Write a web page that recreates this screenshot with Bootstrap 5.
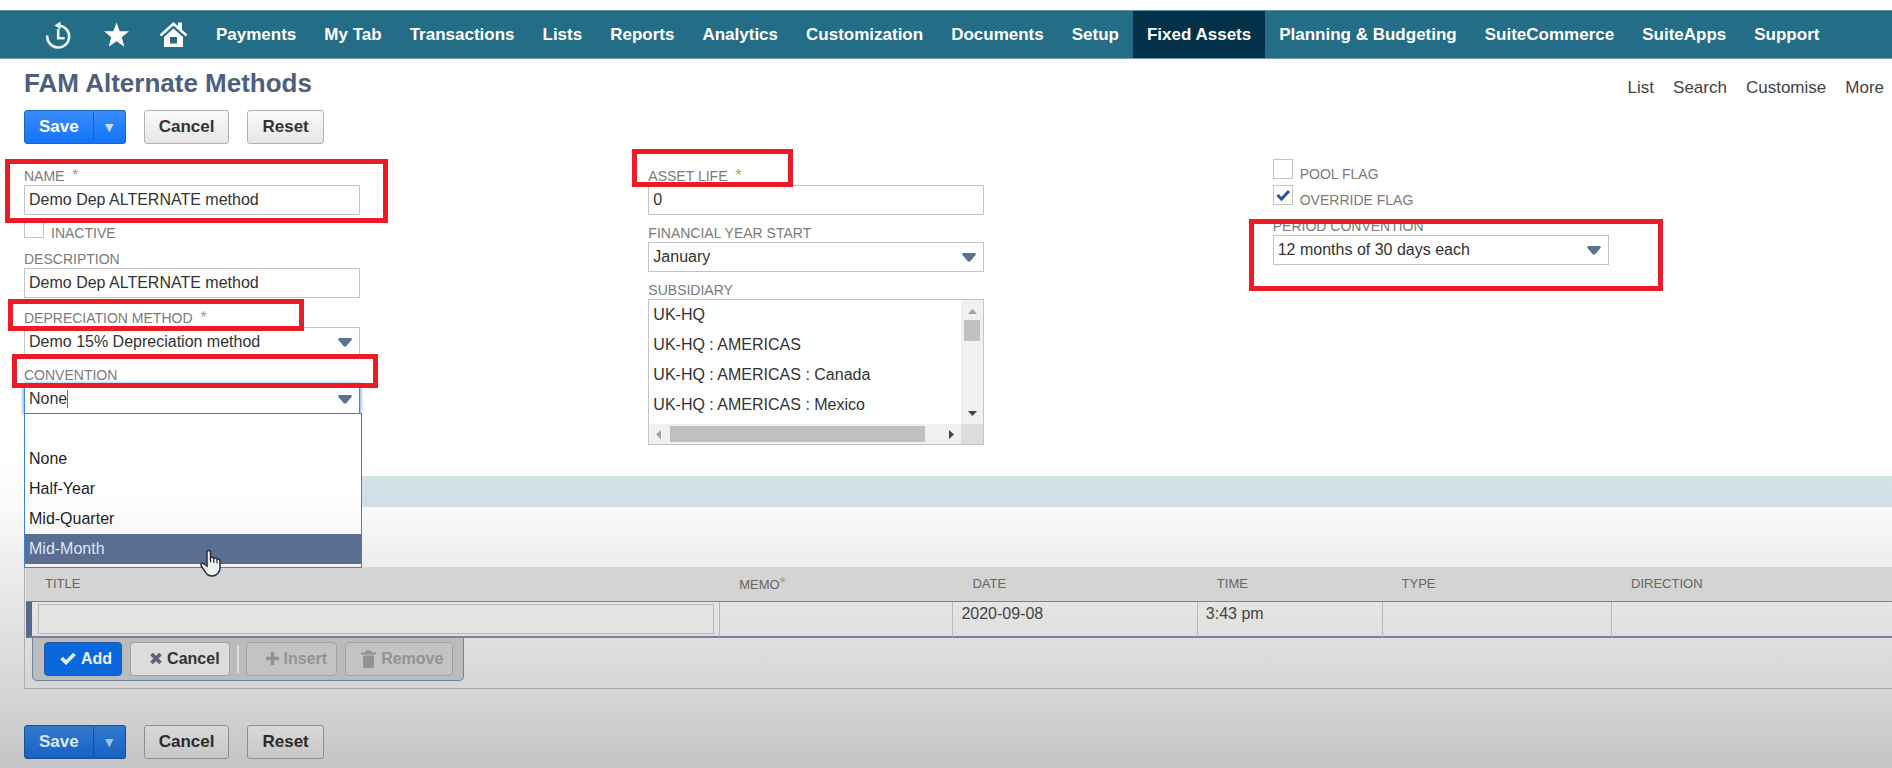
<!DOCTYPE html>
<html lang="en">
<head>
<meta charset="utf-8">
<meta name="viewport" content="width=device-width, initial-scale=1">
<title>FAM Alternate Methods</title>
<link href="https://cdn.jsdelivr.net/npm/bootstrap@5.3.0/dist/css/bootstrap.min.css" rel="stylesheet">
<style>
  body {
    font-family: "Liberation Sans", Arial, sans-serif;
    font-size: 16px;
    color: #333;
    min-height: 100vh;
    overflow-x: hidden;
    background: linear-gradient(#fff 0, #fff 59%, #fafafa 66%, #eee 73%, #dedede 84%, #d4d4d4 91%, #c4c4c4 100%) no-repeat;
  }
  /* main navigation */
  .main-nav { background: #236d86; height: 49px; margin-top: 10px; padding: 0 0 0 31px; border-bottom: 1px solid #6d9daf; border-top: 1px solid #5c93a6; }
  .main-nav .nav-link { color: #fff; font-size: 17px; font-weight: 700; line-height: 20px; padding: 0 14px; white-space: nowrap; display: flex; align-items: center; height: 47px; }
  .main-nav .nav-link.active { background: #03314a; }
  /* page heading */
  .page-head { padding-top: 9px; }
  .page-title { font-size: 26px; line-height: 30px; font-weight: 700; color: #4d5f7e; }
  .page-links { gap: 19px; }
  .page-links a { color: #444; font-size: 17px; line-height: 20px; text-decoration: none; }
  .edge { padding-left: 24px; }
  /* form buttons */
  .form-btn { font-size: 17px; font-weight: 700; line-height: 20px; height: 34px; padding: 0 14px; border-radius: 3px; border: 1px solid #b2b2b2; color: #333; background: linear-gradient(#fafafa, #e6e6e6); }
  .form-btn.main { color: #fff; border-color: #1a62c4; background: linear-gradient(#3a8cfd, #1473f8); }
  .form-btn.arrow { padding: 0 8px; width: 32px; font-size: 14px; color: #cfdcf0; }
  .shade .form-btn { background: linear-gradient(#d8d8d8, #c8c8c8); border-color: #8f8f8f; color: #2b2b2b; }
  .shade .form-btn.main { background: linear-gradient(#3078cf, #1862c4); border-color: #1b4f93; color: #dde8f3; }
  .shade .form-btn.arrow { color: #a9c0dc; }
  .gap-btn { gap: 18px; }
  /* fields */
  .entry-form { padding-top: 12px; }
  .field-col { flex: 0 0 33%; padding-left: 24px; }
  .field { position: relative; margin-top: 9px; max-width: 336px; }
  .field-label { display: block; font-size: 14px; line-height: 18px; color: #7b7b7b; white-space: nowrap; }
  .field-label.req { padding-top: 2px; }
  .star { color: #b5a05a; font-size: 16px; line-height: 16px; margin-left: 4px; }
  .field .form-control, .field .form-select { height: 30px; font-size: 16px; line-height: 20px; padding: 0 4px; border: 1px solid #c4c4c4; border-radius: 0; color: #333; background-color: #fff; }
  .field .form-select, .field .combo { background-image: url("data:image/svg+xml,%3Csvg xmlns='http://www.w3.org/2000/svg' viewBox='0 0 14 9'%3E%3Cpath d='M1 0h12l1 1.500-6 7h-2l-6-7z' fill='%235d7396'/%3E%3C/svg%3E"); background-repeat: no-repeat; background-size: 14px 9px; background-position: right 7px center; }
  .field .combo { border-color: #3d8ae6; box-shadow: 0 0 3px 1px #6eaaf2; }
  .tick-row { display: flex; padding: 3px 0; }
  .tick-row input { appearance: none; width: 20px; height: 20px; margin: 0 7px 0 0; border: 1px solid #c4c4c4; background: #fff; }
  .tick-row input:checked { background: #fff url("data:image/svg+xml,%3Csvg xmlns='http://www.w3.org/2000/svg' viewBox='0 0 18 18'%3E%3Cpath d='M3.500 9l4 4 7.500-8' fill='none' stroke='%23275692' stroke-width='3'/%3E%3C/svg%3E"); }
  .tick-row label { font-size: 14px; line-height: 14px; color: #7b7b7b; padding-top: 8px; height: 20px; white-space: nowrap; }
  /* subsidiary list */
  .sub-list { display: grid; grid-template: 1fr 20px / 1fr 22px; height: 146px; border: 1px solid #c4c4c4; background: #fff; }
  .sub-list select { appearance: none; border: 0; outline: 0; padding: 0; overflow: hidden; color: #333; height: 124px; min-width: 0; background: #fff; font-size: 16px; }
  .sub-list option { padding: 6px 4px; height: 30px; }
  .bar-v, .bar-h { background: #f0f0f0; display: flex; align-items: center; }
  .bar-v { flex-direction: column; padding: 9px 0 8px; }
  .bar-v i { width: 16px; height: 21px; margin-top: 6px; background: #c0c0c0; }
  .bar-h { padding: 0 7px; }
  .bar-h i { flex: 1; height: 16px; margin: 0 24px 0 9px; background: #c0c0c0; }
  .bar-c { background: #dcdcdc; }
  /* open choice list */
  .choices { position: absolute; top: 47px; left: 0; width: 338px; z-index: 3; margin: 0; padding: 30px 0 3px; list-style: none; background: linear-gradient(#fff 50%, #f2f2f2); border: 1px solid #3b82d4; color: #222; }
  .choices li { height: 30px; line-height: 30px; padding-left: 4px; }
  .choices li.on { background: #5a6e92; color: #dde6f3; }
  .caret { position: absolute; left: 43px; top: 24px; width: 1px; height: 18px; background: #1e9d9d; }
  .hand { position: absolute; left: 175px; top: 134px; }
  /* red callouts over the form */
  .callout { position: absolute; border: 5px solid #ec1c26; z-index: 2; pointer-events: none; }
  .c-name { left: -19px; top: -6px; width: 383px; height: 64px; }
  .c-method { left: -16px; top: -8px; width: 296px; height: 32px; }
  .c-conv { left: -12px; top: -12px; width: 366px; height: 34px; }
  .c-life { left: -16px; top: -16px; width: 161px; height: 38px; }
  .c-period { left: -24px; top: 2px; width: 414px; height: 72px; }
  /* notes table */
  .band { height: 31px; margin: 31px 0 0 24px; background: linear-gradient(#d2e4e6, #d0dee5); }
  .notes { margin-left: 24px; padding: 60px 0 7px 1px; border-left: 1px solid #b0b0b0; border-bottom: 1px solid #a4a4a4; }
  .note-table { table-layout: fixed; width: 100%; margin: 0; border-collapse: separate; border-spacing: 0; }
  .note-table th { height: 35px; padding: 0 19px; background: #d3d4d3; color: #666; font-size: 13px; line-height: 16px; font-weight: 400; border-bottom: 1px solid #7b819c; }
  .note-table td { height: 36px; padding: 2px 8px; vertical-align: top; line-height: 20px; background: linear-gradient(#e5e6e3, #dfdfdf); border-right: 1px solid #b6b8bb; border-bottom: 2px solid #7b819c; color: #444; }
  .note-table td:first-child { border-left: 6px solid #536a8f; padding: 2px 5px 2px 6px; }
  .note-table td:last-child { border-right: 0; }
  .note-table input { display: block; width: 100%; height: 30px; border: 1px solid #b9b9b9; border-radius: 0; background: #e3e3e2; }
  .tray { display: inline-flex; align-items: center; margin-left: 6px; height: 43px; padding: 0 10px 1px 11px; background: #bbb; border: 1px solid #6f83a3; border-top: 0; border-radius: 0 0 5px 5px; vertical-align: top; }
  .row-btn { display: flex; align-items: center; gap: 5px; height: 34px; padding: 0 9px 0 15px; border-radius: 4px; border: 1px solid #a2a2a2; background: #dcdcdc; color: #333; font-size: 16px; line-height: 20px; font-weight: 700; }
  .row-btn.add { background: #0b67dc; border-color: #2457a0; color: #e5eefa; }
  .row-btn:disabled { background: #c3c3c3; color: #929292; }
  .tray-sep { width: 2px; height: 28px; margin: 0 7px; background: #dedede; }
</style>
</head>
<body>
<nav class="main-nav navbar navbar-expand" aria-label="Main">
  <div class="nav flex-nowrap">
    <a class="nav-link" href="#" aria-label="Recent records"><svg width="29" height="28" viewBox="0 0 29 28" fill="none" stroke="#e8f6f8" stroke-width="2.600"><path d="M2.200 14.500A11 11 0 1 0 13.200 4.500"/><path d="M13.200 8v9.200h6.500"/><path d="M9.500 4.500L15.500 .5v8z" fill="#e8f6f8" stroke="none"/></svg></a>
    <a class="nav-link" href="#" aria-label="Shortcuts"><svg width="29" height="28" viewBox="0 0 29 28" fill="#fff"><path d="M14.500 1.500l3.200 8.700H27l-7.200 6 2.500 9.500-7.800-5.400-7.800 5.400 2.500-9.500L2 10.200h9.300z"/></svg></a>
    <a class="nav-link" href="#" aria-label="Home"><svg width="29" height="28" viewBox="0 0 29 28"><path d="M1.500 14.500L14.500 2.800l13 11.700" fill="none" stroke="#fff" stroke-width="2.600"/><path d="M19 1.500h4V9l-4-3.500z" fill="#fff"/><path d="M5 16L14.500 7.500 24 16v10H5z M11 16v6.500h7V16z" fill="#fff" fill-rule="evenodd"/></svg></a>
    <a class="nav-link" href="#">Payments</a>
    <a class="nav-link" href="#">My Tab</a>
    <a class="nav-link" href="#">Transactions</a>
    <a class="nav-link" href="#">Lists</a>
    <a class="nav-link" href="#">Reports</a>
    <a class="nav-link" href="#">Analytics</a>
    <a class="nav-link" href="#">Customization</a>
    <a class="nav-link" href="#">Documents</a>
    <a class="nav-link" href="#">Setup</a>
    <a class="nav-link active" aria-current="page" href="#">Fixed Assets</a>
    <a class="nav-link" href="#">Planning &amp; Budgeting</a>
    <a class="nav-link" href="#">SuiteCommerce</a>
    <a class="nav-link" href="#">SuiteApps</a>
    <a class="nav-link" href="#">Support</a>
  </div>
</nav>

<main>
  <header class="page-head edge d-flex justify-content-between pe-2">
    <h1 class="page-title mb-0">FAM Alternate Methods</h1>
    <div class="page-links d-flex align-items-end">
      <a href="#">List</a><a href="#">Search</a><a href="#">Customise</a><a href="#">More</a>
    </div>
  </header>

  <div class="edge d-flex gap-btn pt-2 mt-1">
    <div class="btn-group">
      <button class="form-btn main rounded-end-0" type="button">Save</button>
      <button class="form-btn main arrow rounded-start-0 border-start-0" type="button" aria-label="More save options">▼</button>
    </div>
    <button class="form-btn" type="button">Cancel</button>
    <button class="form-btn" type="button">Reset</button>
  </div>

  <form class="entry-form d-flex">
    <div class="field-col">
      <div class="field">
        <label class="field-label req" for="name">NAME <span class="star">*</span></label>
        <input class="form-control" id="name" type="text" value="Demo Dep ALTERNATE method">
        <span class="callout c-name"></span>
      </div>
      <div class="tick-row"><input id="inactive" type="checkbox"><label for="inactive">INACTIVE</label></div>
      <div class="field">
        <label class="field-label" for="desc">DESCRIPTION</label>
        <input class="form-control" id="desc" type="text" value="Demo Dep ALTERNATE method">
      </div>
      <div class="field">
        <label class="field-label req" for="method">DEPRECIATION METHOD <span class="star">*</span></label>
        <select class="form-select" id="method"><option>Demo 15% Depreciation method</option></select>
        <span class="callout c-method"></span>
      </div>
      <div class="field">
        <label class="field-label" for="conv">CONVENTION</label>
        <input class="form-control combo" id="conv" type="text" role="combobox" aria-expanded="true" aria-controls="conv-list" value="None">
        <span class="caret"></span>
        <ul class="choices" id="conv-list" role="listbox">
          <li role="option">None</li>
          <li role="option">Half-Year</li>
          <li role="option">Mid-Quarter</li>
          <li class="on" role="option" aria-selected="true">Mid-Month
            <svg class="hand" width="22" height="29" viewBox="0 0 22 29"><path d="M7 15V3.500a2 2 0 0 1 3.500 0V10c1-1.300 3-1 3.300.5 1-1 2.900-.7 3.200.8 1.200-.8 3 0 3 1.700v7c0 3-1.500 5-4 7-2 1.200-6 1.200-8 0C5.500 25 3.500 21 1.300 18c-1-2 1-3.500 2.700-2.200L7 18z" fill="#f0f0f0" stroke="#28303c" stroke-width="1.500"/><path d="M10.500 10v4.500M13.800 11v4M17 12v3.500" stroke="#28303c" stroke-width="1.200"/></svg>
          </li>
        </ul>
        <span class="callout c-conv"></span>
      </div>
    </div>

    <div class="field-col">
      <div class="field">
        <label class="field-label req" for="life">ASSET LIFE <span class="star">*</span></label>
        <input class="form-control" id="life" type="text" value="0">
        <span class="callout c-life"></span>
      </div>
      <div class="field">
        <label class="field-label" for="year">FINANCIAL YEAR START</label>
        <select class="form-select" id="year"><option>January</option></select>
      </div>
      <div class="field">
        <label class="field-label" for="subs">SUBSIDIARY</label>
        <div class="sub-list">
          <select id="subs" multiple size="4">
            <option>UK-HQ</option>
            <option>UK-HQ : AMERICAS</option>
            <option>UK-HQ : AMERICAS : Canada</option>
            <option>UK-HQ : AMERICAS : Mexico</option>
          </select>
          <div class="bar-v">
            <svg width="9" height="5" viewBox="0 0 9 5"><path d="M0 5l4.500-5L9 5z" fill="#a3a3a3"/></svg><i></i>
            <svg class="mt-auto" width="9" height="5" viewBox="0 0 9 5"><path d="M0 0l4.500 5L9 0z" fill="#444"/></svg>
          </div>
          <div class="bar-h">
            <svg width="5" height="9" viewBox="0 0 5 9"><path d="M5 0L0 4.500 5 9z" fill="#a3a3a3"/></svg><i></i>
            <svg width="5" height="9" viewBox="0 0 5 9"><path d="M0 0l5 4.500L0 9z" fill="#444"/></svg>
          </div>
          <div class="bar-c"></div>
        </div>
      </div>
    </div>

    <div class="field-col">
      <div class="tick-row"><input id="pool" type="checkbox"><label for="pool">POOL FLAG</label></div>
      <div class="tick-row"><input id="override" type="checkbox" checked><label for="override">OVERRIDE FLAG</label></div>
      <div class="field">
        <label class="field-label" for="period">PERIOD CONVENTION</label>
        <select class="form-select" id="period"><option>12 months of 30 days each</option></select>
        <span class="callout c-period"></span>
      </div>
    </div>
  </form>

  <div class="band"></div>
  <section class="notes">
    <table class="note-table">
      <colgroup><col style="width:37.2%"><col style="width:12.5%"><col style="width:13.1%"><col style="width:9.9%"><col style="width:12.3%"><col style="width:15%"></colgroup>
      <thead><tr><th>TITLE</th><th>MEMO<span class="star ms-0">*</span></th><th>DATE</th><th>TIME</th><th>TYPE</th><th>DIRECTION</th></tr></thead>
      <tbody><tr><td><input type="text" aria-label="Title"></td><td></td><td>2020-09-08</td><td>3:43 pm</td><td></td><td></td></tr></tbody>
    </table>
    <div class="tray">
      <button class="row-btn add" type="button"><svg width="16" height="13" viewBox="0 0 16 13"><path d="M1.500 6l4.500 4.500L14.500 2" fill="none" stroke="currentColor" stroke-width="3.600"/></svg>Add</button>
      <button class="row-btn ms-2" type="button"><svg class="ms-1" width="12" height="13" viewBox="0 0 12 13"><path d="M1.500 2l9 9M10.500 2l-9 9" stroke="#5a6475" stroke-width="3.800"/></svg>Cancel</button>
      <span class="tray-sep"></span>
      <button class="row-btn" type="button" disabled><svg class="ms-1" width="13" height="13" viewBox="0 0 13 13"><path d="M6.500 0v13M0 6.500h13" stroke="currentColor" stroke-width="3.400"/></svg>Insert</button>
      <button class="row-btn ms-2" type="button" disabled><svg width="15" height="18" viewBox="0 0 15 18" fill="currentColor"><path d="M0 2.500h4.500V.5h6v2H15v2H0zM2 5.500h11V16q0 2-2 2H4q-2 0-2-2z"/></svg>Remove</button>
    </div>
  </section>

  <div class="edge shade d-flex gap-btn pt-3 mt-3 pb-2">
    <div class="btn-group mt-1">
      <button class="form-btn main rounded-end-0" type="button">Save</button>
      <button class="form-btn main arrow rounded-start-0 border-start-0" type="button" aria-label="More save options">▼</button>
    </div>
    <button class="form-btn mt-1" type="button">Cancel</button>
    <button class="form-btn mt-1" type="button">Reset</button>
  </div>
</main>
<script src="https://cdn.jsdelivr.net/npm/bootstrap@5.3.0/dist/js/bootstrap.bundle.min.js"></script>
</body>
</html>
